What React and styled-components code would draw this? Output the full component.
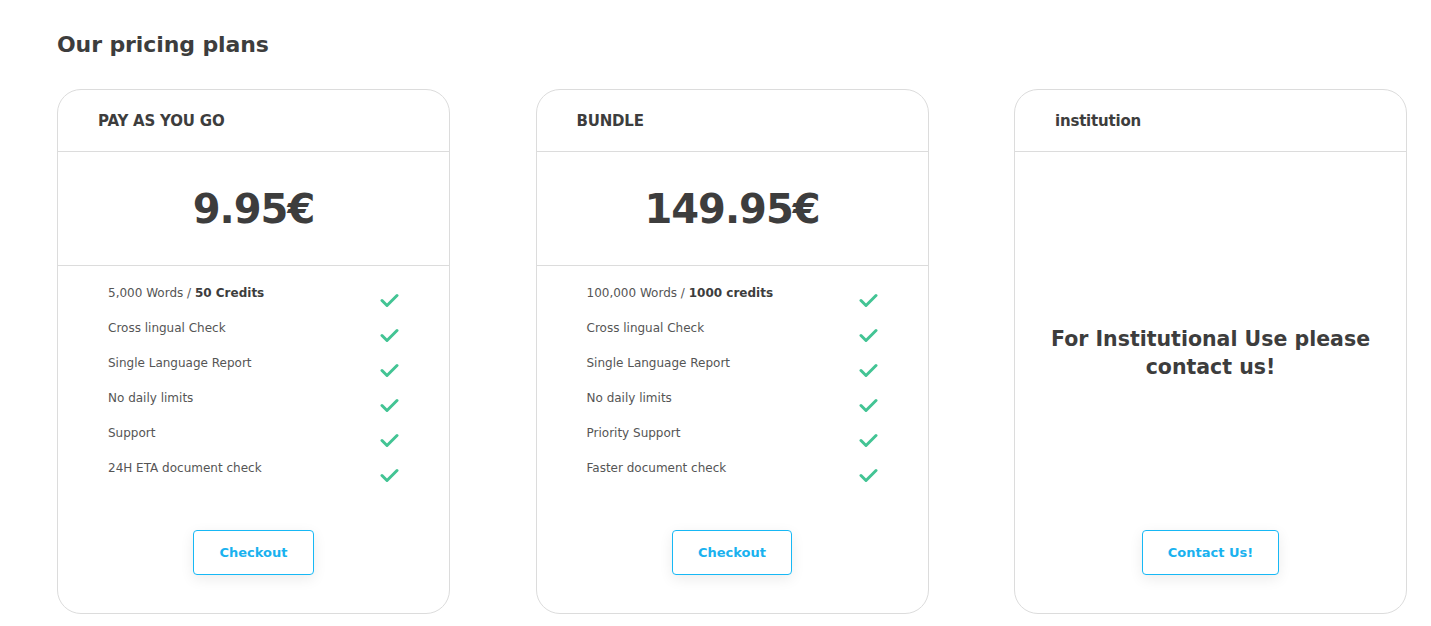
import React from "react";
import styled, { createGlobalStyle } from "styled-components";

const plans = [
  {
    name: "PAY AS YOU GO",
    price: "9.95€",
    features: [
      { text: "5,000 Words / ", bold: "50 Credits" },
      { text: "Cross lingual Check" },
      { text: "Single Language Report" },
      { text: "No daily limits" },
      { text: "Support" },
      { text: "24H ETA document check" },
    ],
    button: "Checkout",
  },
  {
    name: "BUNDLE",
    price: "149.95€",
    features: [
      { text: "100,000 Words / ", bold: "1000 credits" },
      { text: "Cross lingual Check" },
      { text: "Single Language Report" },
      { text: "No daily limits" },
      { text: "Priority Support" },
      { text: "Faster document check" },
    ],
    button: "Checkout",
  },
  {
    name: "institution",
    message: "For Institutional Use please contact us!",
    button: "Contact Us!",
  },
];

const Check = () => (
  <svg width="19" height="15" viewBox="0 0 19 15" fill="none">
    <path
      d="M2 7.5 L7 12.5 L17 2.5"
      stroke="#43c494"
      strokeWidth="3"
      strokeLinecap="round"
      strokeLinejoin="round"
    />
  </svg>
);

const App = () => {
  return (
    <Page>
      <GlobalStyle />
      <Title>Our pricing plans</Title>
      <Grid>
        {plans.map((plan) => (
          <Card key={plan.name}>
            <CardHeader>{plan.name}</CardHeader>
            {plan.price ? (
              <>
                <Price>{plan.price}</Price>
                <Features>
                  {plan.features.map((f) => (
                    <Feature key={f.text}>
                      <span>
                        {f.text}
                        {f.bold && <b>{f.bold}</b>}
                      </span>
                      <CheckWrap>
                        <Check />
                      </CheckWrap>
                    </Feature>
                  ))}
                </Features>
              </>
            ) : (
              <Message>{plan.message}</Message>
            )}
            <Footer>
              <Button>{plan.button}</Button>
            </Footer>
          </Card>
        ))}
      </Grid>
    </Page>
  );
};

export default App;

const GlobalStyle = createGlobalStyle`
  body {
    margin: 0;
    background: #fff;
    font-family: "DejaVu Sans", "Open Sans", sans-serif;
    color: #3d3d3d;
  }
`;

const Page = styled.main`
  padding: 31px 20px 0 57px;
`;

const Title = styled.h2`
  margin: 0;
  font-size: 22px;
  line-height: 28px;
  font-weight: 700;
  color: #3d3d3d;
  letter-spacing: -0.1px;
`;

const Grid = styled.section`
  display: grid;
  grid-template-columns: repeat(3, 393px);
  column-gap: 85.5px;
  margin-top: 30px;
`;

const Card = styled.div`
  box-sizing: border-box;
  height: 525px;
  border: 1px solid #dcdcdc;
  border-radius: 24px;
  display: flex;
  flex-direction: column;
  overflow: hidden;
`;

const CardHeader = styled.div`
  height: 61px;
  border-bottom: 1px solid #dcdcdc;
  display: flex;
  align-items: center;
  padding-left: 40px;
  font-size: 15px;
  font-weight: 700;
  color: #3d3d3d;
  letter-spacing: -0.2px;
`;

const Price = styled.div`
  height: 113px;
  border-bottom: 1px solid #dcdcdc;
  display: flex;
  align-items: center;
  justify-content: center;
  font-size: 40px;
  font-weight: 700;
  color: #3d3d3d;
  letter-spacing: -1px;
`;

const Features = styled.ul`
  list-style: none;
  margin: 0;
  padding: 19px 50px 0 50px;
`;

const Feature = styled.li`
  height: 35px;
  display: flex;
  justify-content: space-between;
  align-items: flex-start;
  font-size: 12px;
  line-height: 17px;
  color: #555;
  b {
    font-weight: 700;
    color: #3d3d3d;
  }
`;

const CheckWrap = styled.span`
  display: flex;
  margin-top: 8px;
`;

const Message = styled.div`
  flex: 1;
  display: flex;
  align-items: center;
  justify-content: center;
  text-align: center;
  padding: 24px 24px 0;
  font-size: 20.5px;
  line-height: 28px;
  font-weight: 700;
  color: #3d3d3d;
`;

const Footer = styled.div`
  margin-top: auto;
  display: flex;
  justify-content: center;
  padding-bottom: 38px;
`;

const Button = styled.button`
  height: 45px;
  padding: 0 25px;
  min-width: 120px;
  border: 1px solid #17b8f5;
  border-radius: 4px;
  background: #fff;
  color: #1ab2ef;
  font-family: inherit;
  font-size: 13px;
  font-weight: 700;
  box-shadow: 0 4px 14px rgba(0, 0, 0, 0.08);
  cursor: pointer;
`;
